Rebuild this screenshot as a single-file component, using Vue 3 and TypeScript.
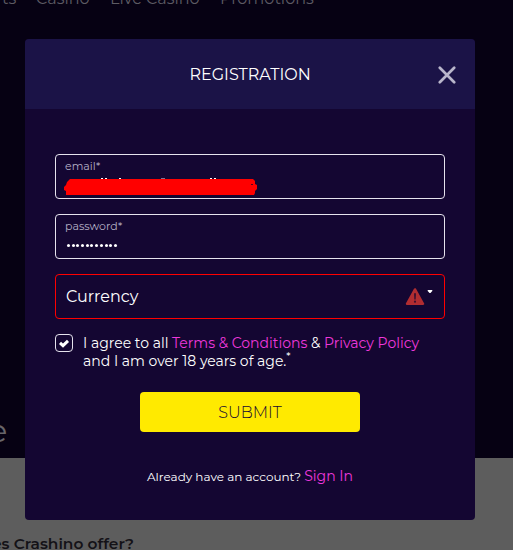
<script setup lang="ts">
import { ref } from 'vue'

const navItems: { label: string; cls: string }[] = [
  { label: 'ts', cls: 'n-sports' },
  { label: 'Casino', cls: 'n-casino' },
  { label: 'Live Casino', cls: 'n-live' },
  { label: 'Promotions', cls: 'n-promo' },
]
const passwordLength = ref(11)
const agreed = ref(true)
</script>

<template>
  <div class="page">
    <div class="hero">
      <nav class="nav">
        <span v-for="item in navItems" :key="item.label" :class="item.cls">{{ item.label }}</span>
      </nav>
      <div class="headline">e</div>
    </div>
    <div class="faq"><span class="question">es Crashino offer?</span></div>

    <section class="modal">
      <header class="modal-head">
        <h1 class="title">REGISTRATION</h1>
        <button class="close" type="button" aria-label="Close">
          <svg width="18" height="18" viewBox="0 0 18 18"><path d="M1.8 1.8L16.2 16.2M16.2 1.8L1.8 16.2" fill="none" stroke="#b9b6cb" stroke-width="2.7" stroke-linecap="round" /></svg>
        </button>
      </header>
      <form class="form" @submit.prevent>
        <div class="field">
          <span class="label">email*</span>
          <svg class="redacted" width="196" height="22" viewBox="0 0 196 22">
            <path d="M38 3.5h2m2 0h2m12 0h2m89 0h2m2 0h2" stroke="#fff" stroke-width="1" />
            <path d="M98 3.6h4" stroke="#8a849f" stroke-width="1" />
            <path d="M7 4H190L192 6V9L194 10V14L192 16V18L191 20H3V16L1 15V12L3 10L4 7Z" fill="#f00" />
            <path d="M188 9.5h2" stroke="#5b001b" stroke-width="1" />
          </svg>
        </div>
        <div class="field">
          <span class="label">password*</span>
          <div class="dots"><i v-for="n in passwordLength" :key="n" /></div>
        </div>
        <div class="field select">
          <span class="currency">Currency</span>
          <svg class="warning" width="20" height="18" viewBox="0 0 20 18">
            <path d="M10 1.4L18 15.8H2Z" fill="#b12d31" stroke="#b12d31" stroke-width="2.4" stroke-linejoin="round" />
            <path d="M9 5.3h2l-.3 6.2H9.3Z" fill="#3d1030" /><circle cx="10" cy="13.7" r="1.1" fill="#3d1030" />
          </svg>
          <svg class="caret" width="6" height="4" viewBox="0 0 6 4"><path d="M.7 0h4.6v1L3.5 3.1h-1L.7 1Z" fill="#fff" /></svg>
        </div>
        <div class="agree">
          <span class="checkbox" role="checkbox" :aria-checked="agreed">
            <svg v-if="agreed" width="12" height="10" viewBox="0 0 12 10"><path d="M2 4.8L5 7.6L10 2.8" fill="none" stroke="#fff" stroke-width="3" /></svg>
          </span>
          <div class="terms">
            I agree to all <a>Terms &amp; Conditions</a> &amp; <a>Privacy Policy</a><br>
            and I am over 18 years of age.<span class="star">*</span>
          </div>
        </div>
        <button class="submit" type="submit">SUBMIT</button>
        <p class="signin">Already have an account? <a>Sign In</a></p>
      </form>
    </section>
  </div>
</template>

<style>
body { margin: 0; overflow: hidden; }
</style>

<style scoped>
* { box-sizing: border-box; }
.page { position: relative; width: 513px; height: 550px; overflow: hidden; background: #5d5d5d; font-family: Montserrat, Inter, sans-serif; color: #fff; white-space: nowrap; }
.hero { height: 458px; background: #060113; overflow: hidden; }
.nav { display: flex; height: 20px; margin-top: -11px; padding-left: 2px; line-height: 20px; font-size: 16px; color: #5d5b63; }
.nav span { flex: none; }
.n-sports { width: 34px; }
.n-casino { width: 74px; }
.n-live { width: 110px; }
.headline { margin: 402px 0 0 -12px; font-size: 32px; line-height: 40px; font-weight: 400; color: #67656a; }
.faq { height: 92px; padding-top: 75px; }
.question { display: block; margin-left: -8px; line-height: 22px; font-size: 15.4px; font-weight: 600; color: #141217; }
.modal { position: absolute; left: 25px; top: 39px; width: 450px; height: 481px; border-radius: 4px; overflow: hidden; background: #140632; }
.modal-head { display: flex; align-items: center; justify-content: flex-end; height: 70px; padding-right: 19px; background: #1b1347; }
.title { flex: 1; margin: 2px 0 0; padding-left: 164.5px; font-size: 16px; line-height: 20px; font-weight: 400; }
.close { display: flex; padding: 0; margin-top: 2px; border: 0; background: none; }
.form { display: flex; flex-direction: column; padding: 45px 30px 0; }
.field { display: flex; flex-direction: column; flex: none; height: 45px; margin-bottom: 15px; padding: 4px 0 0 9px; border: 1px solid #e5e2ed; border-radius: 4px; }
.label { font-size: 11px; line-height: 14px; color: #b4b0c5; }
.redacted { margin: 2px 0 0 -2px; }
.dots { display: flex; gap: 1.7px; margin: 11px 0 0 2px; }
.dots i { width: 3px; height: 3px; border-radius: 50%; background: #fff; }
.select { flex-direction: row; align-items: center; padding: 0 11px 0 10px; margin-bottom: 14px; border-color: #f00; }
.currency { flex: 1; font-size: 16px; line-height: 20px; padding-top: 1px; }
.caret { align-self: flex-start; margin: 15px 0 0 2px; }
.agree { display: flex; }
.checkbox { display: flex; align-items: center; justify-content: center; width: 18px; height: 18px; margin: 1px 10px 0 0; border: 1px solid #e5e2ed; border-radius: 4px; }
.terms { padding-top: 1px; font-size: 14px; line-height: 18px; }
a { color: #ee38dc; }
.star { position: relative; top: -6px; font-size: 11px; line-height: 0; }
.submit { align-self: center; width: 220px; height: 40px; margin-top: 22px; padding: 1px 0 0; border: 0; border-radius: 4px; background: #ffea00; color: #140632; font: 300 16px Montserrat, Inter, sans-serif; }
.signin { margin: 34px 0 0; line-height: 20px; font-size: 12px; text-align: center; }
.signin a { font-size: 14px; }
</style>
